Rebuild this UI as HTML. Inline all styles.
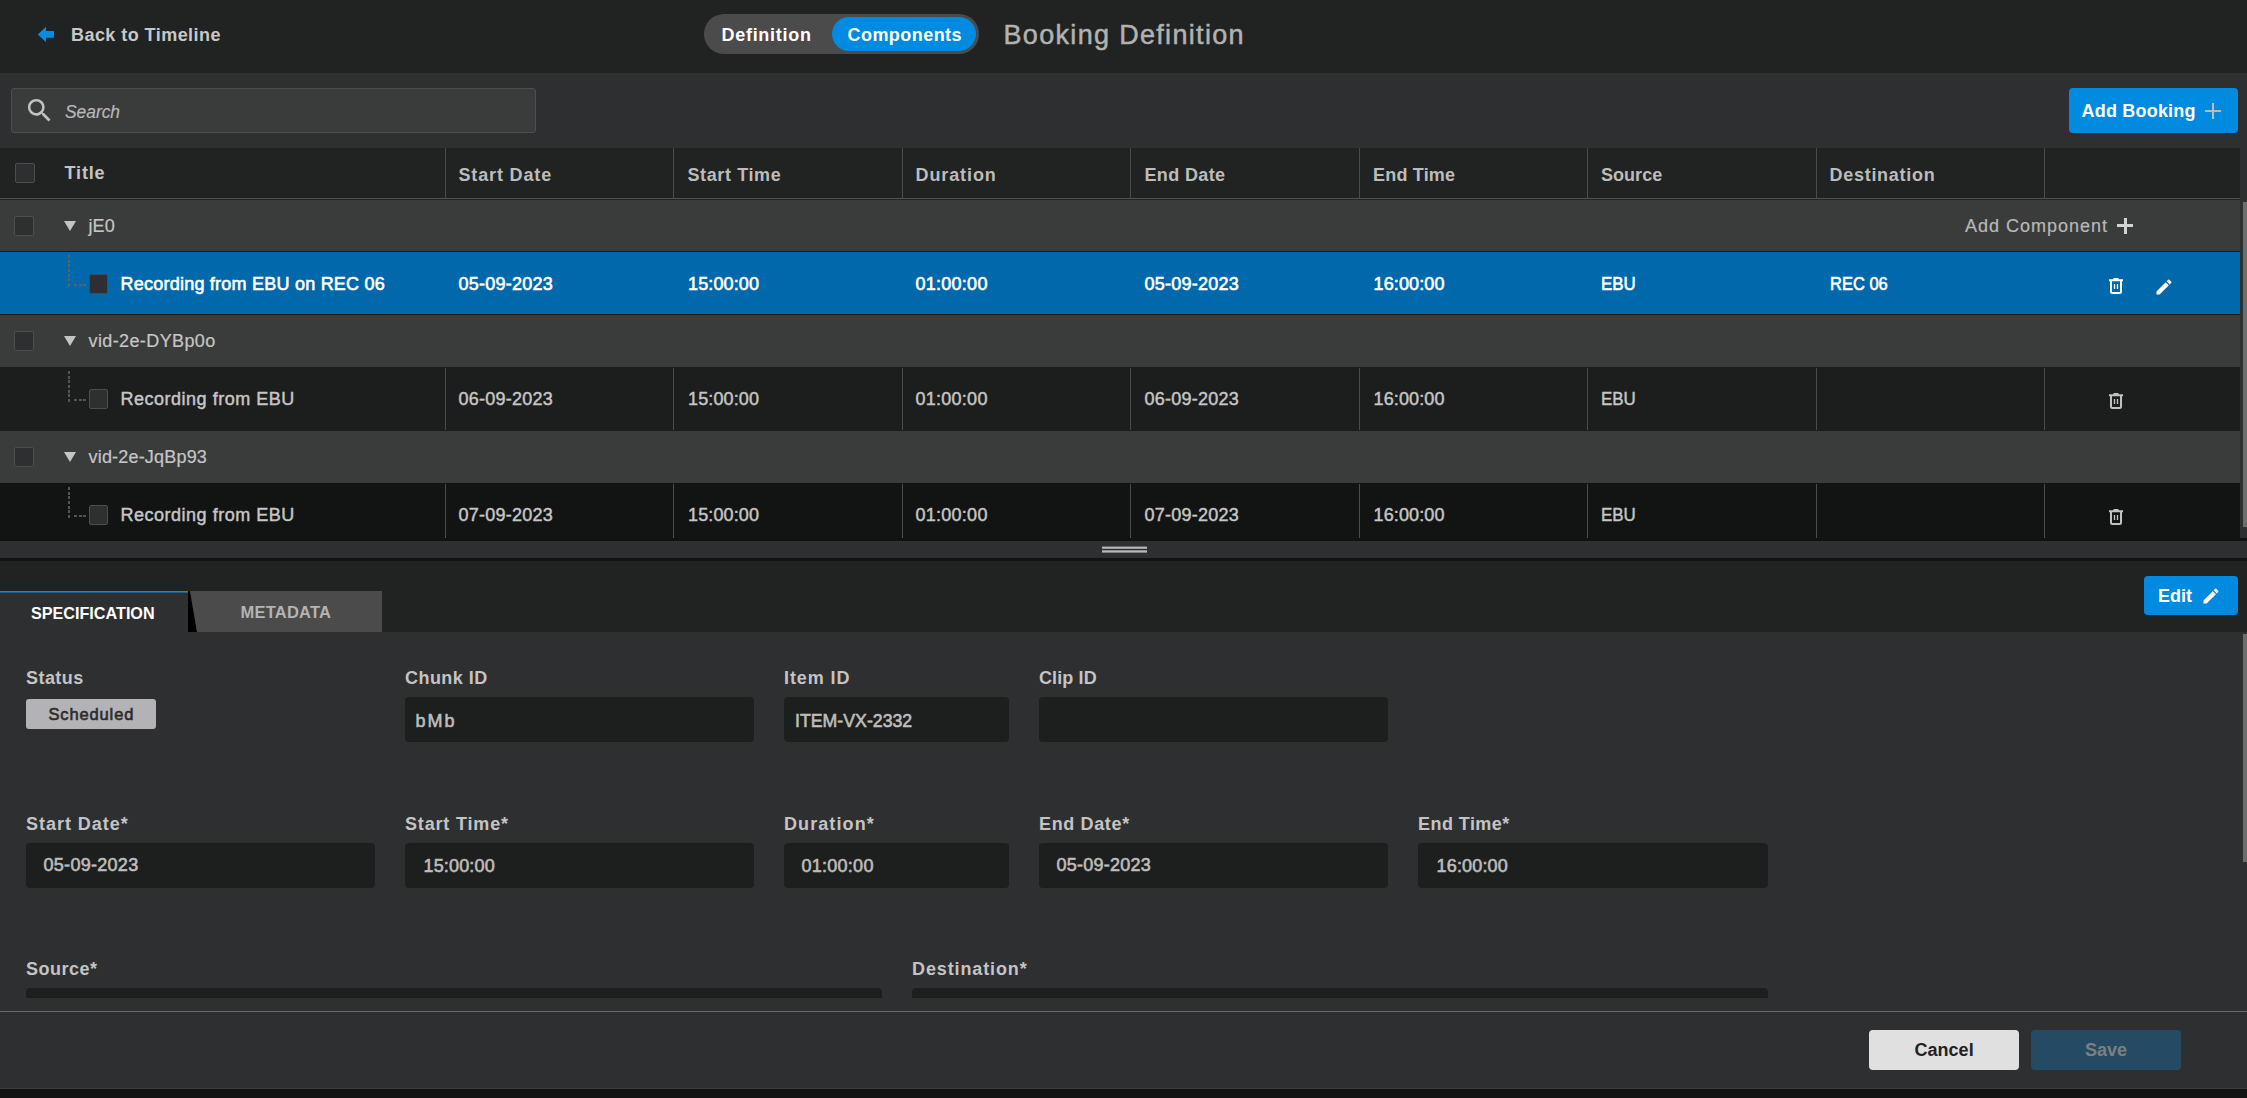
<!DOCTYPE html>
<html lang="en">
<head>
<meta charset="utf-8">
<title>Booking Definition</title>
<style>
*{box-sizing:border-box;margin:0;padding:0}
html,body{width:2247px;height:1098px;overflow:hidden;background:#212322}
body{font-family:"Liberation Sans",sans-serif;color:#c8c8c8;position:relative;font-size:18px}
.abs{position:absolute}
.t{position:absolute;white-space:nowrap;line-height:24px;height:24px;font-size:18px}
.sb{-webkit-text-stroke:0.6px currentColor}
.b{font-weight:bold}
#topbar{left:0;top:0;width:2247px;height:73px;background:#212322}
#toolbar{left:0;top:73px;width:2247px;height:75px;background:#2e2f31}
#thead{left:0;top:148px;width:2240px;height:50px;background:#212322}
#tbody{left:0;top:200px;width:2240px;height:338px;background:#1c1d1d;overflow:hidden}
#vscroll1{left:2240px;top:148px;width:7px;height:390px;background:#2e2f31}
.grp{position:absolute;left:0;width:2240px;background:#3a3c3b}
.row{position:absolute;left:0;width:2240px}
.sep{position:absolute;width:1px;background:#4a4b4a}
.cb{position:absolute;width:20px;height:20px;background:#2e2f31;border:1px solid #4c4d4d;border-radius:2px}
.tri{position:absolute;width:0;height:0;border-left:6px solid transparent;border-right:6px solid transparent;border-top:10px solid #c4c4c4}
.hd{color:#bcbcbc}
.gt{color:#c6c6c6;-webkit-text-stroke:0.2px currentColor}
.cv{color:#c6c6c6;-webkit-text-stroke-width:0.45px}
.sel .cv{color:#fff;-webkit-text-stroke-width:0.6px}
.dv{position:absolute;width:2px;background:repeating-linear-gradient(to bottom,#535454 0,#535454 3px,transparent 3px,transparent 4.650px)}
.dh{position:absolute;height:2px;background:repeating-linear-gradient(to right,#535454 0,#535454 3.200px,transparent 3.200px,transparent 4.500px)}
.sel .dv{background:repeating-linear-gradient(to bottom,#5f625f 0,#5f625f 3px,transparent 3px,transparent 4.650px)}
.sel .dh{background:repeating-linear-gradient(to right,#5f625f 0,#5f625f 3.200px,transparent 3.200px,transparent 4.500px)}
.lbl{font-weight:bold;color:#c4c4c4}
.inp{position:absolute;height:45px;background:#1d1f1e;border-radius:4px}
.iv{color:#bdbdbd}
</style>
</head>
<body>
<div id="topbar" class="abs">
<svg class="abs" style="left:37px;top:26px" width="18" height="18" viewBox="0 0 18 18"><path d="M0.750 8.500 L9 0.800 L9 5 L17 5 L17 11.800 L9 11.800 L9 16.100 Z" fill="#028ee6"/></svg>
<span class="t b" style="letter-spacing:0.45px;left:71px;top:23px;color:#c8c8c8">Back to Timeline</span>
<div class="abs" style="left:704px;top:14px;width:275px;height:40px;border-radius:20px;background:#4b4b4b"></div>
<div class="abs" style="left:832px;top:17px;width:144px;height:34px;border-radius:17px;background:#008be0"></div>
<span class="t b" style="letter-spacing:0.71px;left:721.5px;top:23px;color:#fff">Definition</span>
<span class="t b" style="letter-spacing:0.45px;left:847.5px;top:23px;color:#fff">Components</span>
<span class="t " style="letter-spacing:1.32px;left:1003.5px;top:18.5px;font-size:27px;line-height:32px;height:32px;color:#b2b2b2;-webkit-text-stroke:0.5px currentColor">Booking Definition</span>
</div>
<div id="toolbar" class="abs">
<div class="abs" style="left:11px;top:15px;width:525px;height:45px;background:#3a3b3b;border:1px solid #4d4e4e;border-radius:3px"></div>
<svg class="abs" style="left:24.300px;top:22.400px" width="31" height="31" viewBox="0 0 24 24"><path fill="#c2c2c2" d="M15.500 14h-.790l-.280-.270A6.471 6.471 0 0 0 16 9.500 6.500 6.500 0 1 0 9.500 16c1.610 0 3.090-.590 4.230-1.570l.270.280v.790l5 4.990L20.490 19l-4.990-5zm-6 0C7.010 14 5 11.990 5 9.500S7.010 5 9.500 5 14 7.010 14 9.500 11.990 14 9.500 14z"/></svg>
<span class="t " style="transform:scaleX(0.9645);transform-origin:0 50%;left:64.5px;top:27px;font-style:italic;color:#b8b8b8;-webkit-text-stroke:0.2px currentColor">Search</span>
<div class="abs" style="left:2069px;top:15px;width:169px;height:45px;border-radius:4px;background:#008be0"></div>
<span class="t b" style="letter-spacing:0.2px;left:2081.5px;top:25.5px;color:#fff">Add Booking</span>
<div class="abs" style="left:2205px;top:36.500px;width:16px;height:2px;background:#b9bcbe"></div>
<div class="abs" style="left:2212px;top:29.500px;width:2px;height:16px;background:#b9bcbe"></div>
</div>
<div id="thead" class="abs">
<div class="cb" style="left:15px;top:15px"></div>
<span class="t b" style="letter-spacing:0.86px;left:64.5px;top:13px;color:#c4c4c4">Title</span>
<div class="sep" style="left:445px;top:0;height:50px"></div>
<div class="sep" style="left:673px;top:0;height:50px"></div>
<div class="sep" style="left:902px;top:0;height:50px"></div>
<div class="sep" style="left:1130px;top:0;height:50px"></div>
<div class="sep" style="left:1359px;top:0;height:50px"></div>
<div class="sep" style="left:1587px;top:0;height:50px"></div>
<div class="sep" style="left:1816px;top:0;height:50px"></div>
<div class="sep" style="left:2044px;top:0;height:50px"></div>
<span class="t b hd" style="letter-spacing:0.85px;left:458.5px;top:15px;">Start Date</span>
<span class="t b hd" style="letter-spacing:0.61px;left:687.5px;top:15px;">Start Time</span>
<span class="t b hd" style="letter-spacing:0.9px;left:915.5px;top:15px;">Duration</span>
<span class="t b hd" style="letter-spacing:0.36px;left:1144.5px;top:15px;">End Date</span>
<span class="t b hd" style="letter-spacing:0.2px;left:1373px;top:15px;">End Time</span>
<span class="t b hd" style="letter-spacing:0.04px;left:1601px;top:15px;">Source</span>
<span class="t b hd" style="letter-spacing:0.72px;left:1829.5px;top:15px;">Destination</span>
</div>
<div class="abs" style="left:0;top:198px;width:2240px;height:1px;background:#4f504f"></div>
<div class="abs" style="left:0;top:199px;width:2240px;height:1px;background:#212322"></div>
<div id="vscroll1" class="abs"><div class="abs" style="left:3px;top:54px;width:4px;height:325px;background:#6b6d6c"></div></div>
<div id="tbody" class="abs">
<div class="grp" style="top:0px;height:51px">
<div class="cb" style="left:14px;top:16px"></div>
<div class="tri" style="left:64px;top:21px"></div>
<span class="t gt" style="letter-spacing:0.1px;left:88.5px;top:14px;">jE0</span>
<span class="t " style="letter-spacing:0.99px;left:1965px;top:14px;color:#b8b8b8;-webkit-text-stroke:0.2px currentColor">Add Component</span>
<div class="abs" style="left:2117px;top:24px;width:16px;height:3px;background:#d2d2d2"></div>
<div class="abs" style="left:2123.500px;top:17.500px;width:3px;height:16px;background:#d2d2d2"></div>
</div>
<div class="row sel" style="top:51px;height:64px;background:#1a1b1b">
<div class="abs" style="left:0;top:1px;width:2240px;height:62px;background:#0068ab"></div>
<div class="dv" style="left:68px;top:4px;height:31px"></div>
<div class="dh" style="left:74px;top:33px;width:12.300px"></div>
<div class="cb" style="left:89px;top:23px;width:19px;border-color:#36506a;"></div>
<span class="t cv sb" style="letter-spacing:0.23px;left:120.5px;top:21px;">Recording from EBU on REC 06</span>
<span class="t cv sb" style="letter-spacing:0.25px;left:458.5px;top:21px;">05-09-2023</span>
<span class="t cv sb" style="letter-spacing:0.13px;left:688px;top:21px;">15:00:00</span>
<span class="t cv sb" style="letter-spacing:0.26px;left:915.5px;top:21px;">01:00:00</span>
<span class="t cv sb" style="letter-spacing:0.25px;left:1144.5px;top:21px;">05-09-2023</span>
<span class="t cv sb" style="letter-spacing:0.13px;left:1373.5px;top:21px;">16:00:00</span>
<span class="t cv sb" style="transform:scaleX(0.938);transform-origin:0 50%;left:1601px;top:21px;">EBU</span>
<span class="t cv sb" style="transform:scaleX(0.9157);transform-origin:0 50%;left:1830px;top:21px;">REC 06</span>
<svg class="abs" style="left:2108px;top:26px" width="16" height="18" viewBox="0 0 16 18"><path fill="none" stroke="#fff" stroke-width="2" d="M1 3.200 H15 M5.500 2 H10.500 M3 4 V14.500 Q3 16 4.500 16 H11.500 Q13 16 13 14.500 V4"/><path stroke="#fff" stroke-width="1.300" d="M6.500 7 V12 M9.500 7 V12"/></svg>
<svg class="abs" style="left:2154.2px;top:25.7px" width="20" height="20" viewBox="0 0 24 24"><path fill="#fff" d="M3 17.250V21h3.750L17.810 9.940l-3.750-3.750L3 17.250zM20.710 7.040a.996.996 0 0 0 0-1.410l-2.340-2.340a.996.996 0 0 0-1.410 0l-1.830 1.830 3.750 3.750 1.830-1.830z"/></svg>
</div>
<div class="grp" style="top:115px;height:52px">
<div class="cb" style="left:14px;top:16px"></div>
<div class="tri" style="left:64px;top:21px"></div>
<span class="t gt" style="letter-spacing:0.39px;left:88.5px;top:14px;">vid-2e-DYBp0o</span>
</div>
<div class="row" style="top:167px;height:64px;background:#1c1d1d">
<div class="sep" style="left:445px;top:1px;height:62px"></div>
<div class="sep" style="left:673px;top:1px;height:62px"></div>
<div class="sep" style="left:902px;top:1px;height:62px"></div>
<div class="sep" style="left:1130px;top:1px;height:62px"></div>
<div class="sep" style="left:1359px;top:1px;height:62px"></div>
<div class="sep" style="left:1587px;top:1px;height:62px"></div>
<div class="sep" style="left:1816px;top:1px;height:62px"></div>
<div class="sep" style="left:2044px;top:1px;height:62px"></div>
<div class="dv" style="left:68px;top:4px;height:31px"></div>
<div class="dh" style="left:74px;top:32px;width:12.300px"></div>
<div class="cb" style="left:89px;top:22px;width:19px;"></div>
<span class="t cv sb" style="letter-spacing:0.51px;left:120.5px;top:19.5px;">Recording from EBU</span>
<span class="t cv sb" style="letter-spacing:0.25px;left:458.5px;top:19.5px;">06-09-2023</span>
<span class="t cv sb" style="letter-spacing:0.13px;left:688px;top:19.5px;">15:00:00</span>
<span class="t cv sb" style="letter-spacing:0.26px;left:915.5px;top:19.5px;">01:00:00</span>
<span class="t cv sb" style="letter-spacing:0.25px;left:1144.5px;top:19.5px;">06-09-2023</span>
<span class="t cv sb" style="letter-spacing:0.13px;left:1373.5px;top:19.5px;">16:00:00</span>
<span class="t cv sb" style="transform:scaleX(0.938);transform-origin:0 50%;left:1601px;top:19.5px;">EBU</span>
<svg class="abs" style="left:2108px;top:25px" width="16" height="18" viewBox="0 0 16 18"><path fill="none" stroke="#c2c2c2" stroke-width="2" d="M1 3.200 H15 M5.500 2 H10.500 M3 4 V14.500 Q3 16 4.500 16 H11.500 Q13 16 13 14.500 V4"/><path stroke="#c2c2c2" stroke-width="1.300" d="M6.500 7 V12 M9.500 7 V12"/></svg>
</div>
<div class="grp" style="top:231px;height:52px">
<div class="cb" style="left:14px;top:16px"></div>
<div class="tri" style="left:64px;top:21px"></div>
<span class="t gt" style="letter-spacing:0.19px;left:88.5px;top:14px;">vid-2e-JqBp93</span>
</div>
<div class="row" style="top:283px;height:64px;background:#121413">
<div class="sep" style="left:445px;top:1px;height:62px"></div>
<div class="sep" style="left:673px;top:1px;height:62px"></div>
<div class="sep" style="left:902px;top:1px;height:62px"></div>
<div class="sep" style="left:1130px;top:1px;height:62px"></div>
<div class="sep" style="left:1359px;top:1px;height:62px"></div>
<div class="sep" style="left:1587px;top:1px;height:62px"></div>
<div class="sep" style="left:1816px;top:1px;height:62px"></div>
<div class="sep" style="left:2044px;top:1px;height:62px"></div>
<div class="dv" style="left:68px;top:4px;height:31px"></div>
<div class="dh" style="left:74px;top:32px;width:12.300px"></div>
<div class="cb" style="left:89px;top:22px;width:19px;"></div>
<span class="t cv sb" style="letter-spacing:0.51px;left:120.5px;top:19.5px;">Recording from EBU</span>
<span class="t cv sb" style="letter-spacing:0.25px;left:458.5px;top:19.5px;">07-09-2023</span>
<span class="t cv sb" style="letter-spacing:0.13px;left:688px;top:19.5px;">15:00:00</span>
<span class="t cv sb" style="letter-spacing:0.26px;left:915.5px;top:19.5px;">01:00:00</span>
<span class="t cv sb" style="letter-spacing:0.25px;left:1144.5px;top:19.5px;">07-09-2023</span>
<span class="t cv sb" style="letter-spacing:0.13px;left:1373.5px;top:19.5px;">16:00:00</span>
<span class="t cv sb" style="transform:scaleX(0.938);transform-origin:0 50%;left:1601px;top:19.5px;">EBU</span>
<svg class="abs" style="left:2108px;top:25px" width="16" height="18" viewBox="0 0 16 18"><path fill="none" stroke="#c2c2c2" stroke-width="2" d="M1 3.200 H15 M5.500 2 H10.500 M3 4 V14.500 Q3 16 4.500 16 H11.500 Q13 16 13 14.500 V4"/><path stroke="#c2c2c2" stroke-width="1.300" d="M6.500 7 V12 M9.500 7 V12"/></svg>
</div>
</div>
<div class="abs" style="left:0;top:538px;width:2247px;height:3px;background:#121212"></div>
<div class="abs" style="left:0;top:541px;width:2247px;height:17px;background:#2e2f31"></div>
<svg class="abs" style="left:1100px;top:544px" width="50" height="12" viewBox="0 0 50 12"><rect x="2" y="2.600" width="45" height="2.200" fill="#b8b8b8"/><rect x="2" y="6.300" width="45" height="2.300" fill="#b8b8b8"/></svg>
<div class="abs" style="left:0;top:558px;width:2247px;height:3px;background:#121212"></div>
<div id="panel" class="abs" style="left:0;top:561px;width:2247px;height:537px;background:#212322">
<div class="abs" style="left:0;top:30px;width:188px;height:41px;background:#2e2f31;border-top:1px solid #0a8be0"></div>
<div class="abs" style="left:0;top:31px;width:188px;height:1px;background:#1b5f8e"></div>
<svg class="abs" style="left:188px;top:30px" width="194" height="41" viewBox="0 0 194 41"><path d="M0 0 H2 L9 41 H0 Z" fill="#000"/><path d="M2 0 H194 V41 H9 Z" fill="#4b4b4b"/></svg>
<span class="t b" style="transform:scaleX(0.9795);transform-origin:0 50%;left:30.5px;top:40px;font-size:16.500px;color:#fff">SPECIFICATION</span>
<span class="t b" style="letter-spacing:0.22px;left:240.5px;top:39px;font-size:16.500px;color:#b4b4b4">METADATA</span>
<div class="abs" style="left:2144px;top:15px;width:94px;height:39px;border-radius:4px;background:#008be0"></div>
<span class="t b" style="letter-spacing:0.01px;left:2158px;top:23px;color:#fff">Edit</span>
<svg class="abs" style="left:2201.3px;top:24.5px" width="20" height="20" viewBox="0 0 24 24"><path fill="#fff" d="M3 17.250V21h3.750L17.810 9.940l-3.750-3.750L3 17.250zM20.710 7.040a.996.996 0 0 0 0-1.410l-2.340-2.340a.996.996 0 0 0-1.410 0l-1.830 1.830 3.750 3.750 1.830-1.830z"/></svg>
<div id="content" class="abs" style="left:0;top:71px;width:2247px;height:379px;background:#2e2f31;overflow:hidden">
<div class="abs" style="left:2243px;top:2px;width:4px;height:228px;background:#6b6d6c"></div>
<span class="t lbl" style="letter-spacing:0.44px;left:26px;top:33.5px;">Status</span>
<div class="abs" style="left:26px;top:67px;width:130px;height:30px;border-radius:3px;background:#b3b3b7"></div>
<span class="t sb" style="letter-spacing:0.86px;left:48.5px;top:69.5px;font-size:16.500px;color:#2b2b2b">Scheduled</span>
<span class="t lbl" style="letter-spacing:0.46px;left:405px;top:33.5px;">Chunk ID</span>
<div class="inp" style="left:405px;top:65px;width:349px"></div>
<span class="t iv sb" style="letter-spacing:2.0px;left:415.5px;top:77px;">bMb</span>
<span class="t lbl" style="letter-spacing:0.9px;left:784px;top:33.5px;">Item ID</span>
<div class="inp" style="left:784px;top:65px;width:225px"></div>
<span class="t iv sb" style="transform:scaleX(0.9847);transform-origin:0 50%;left:794.5px;top:76.5px;">ITEM-VX-2332</span>
<span class="t lbl" style="letter-spacing:0.12px;left:1039px;top:33.5px;">Clip ID</span>
<div class="inp" style="left:1039px;top:65px;width:349px"></div>
<span class="t lbl" style="letter-spacing:0.97px;left:26px;top:179.5px;">Start Date*</span>
<div class="inp" style="left:26px;top:211px;width:349px"></div>
<span class="t iv sb" style="letter-spacing:0.29px;left:43.5px;top:220.5px;">05-09-2023</span>
<span class="t lbl" style="letter-spacing:0.83px;left:405px;top:179.5px;">Start Time*</span>
<div class="inp" style="left:405px;top:211px;width:349px"></div>
<span class="t iv sb" style="letter-spacing:0.16px;left:423.5px;top:221.5px;">15:00:00</span>
<span class="t lbl" style="letter-spacing:1.09px;left:784px;top:179.5px;">Duration*</span>
<div class="inp" style="left:784px;top:211px;width:225px"></div>
<span class="t iv sb" style="letter-spacing:0.26px;left:801.5px;top:221.5px;">01:00:00</span>
<span class="t lbl" style="letter-spacing:0.64px;left:1039px;top:179.5px;">End Date*</span>
<div class="inp" style="left:1039px;top:211px;width:349px"></div>
<span class="t iv sb" style="letter-spacing:0.24px;left:1056.5px;top:220.5px;">05-09-2023</span>
<span class="t lbl" style="letter-spacing:0.45px;left:1418px;top:179.5px;">End Time*</span>
<div class="inp" style="left:1418px;top:211px;width:350px"></div>
<span class="t iv sb" style="letter-spacing:0.18px;left:1436.5px;top:221.5px;">16:00:00</span>
<span class="t lbl" style="letter-spacing:0.48px;left:26px;top:325px;">Source*</span>
<div class="inp" style="left:26px;top:356px;width:856px;height:10px;border-radius:4px 4px 0 0"></div>
<span class="t lbl" style="letter-spacing:0.88px;left:912px;top:325px;">Destination*</span>
<div class="inp" style="left:912px;top:356px;width:856px;height:10px;border-radius:4px 4px 0 0"></div>
</div>
<div class="abs" style="left:0;top:450px;width:2247px;height:78px;background:#2e2f31;border-top:1px solid #6a6b6c"></div>
<div class="abs" style="left:1869px;top:469px;width:150px;height:40px;border-radius:4px;background:#e0e0e0"></div>
<span class="t b" style="letter-spacing:0.02px;left:1914.5px;top:476.5px;color:#222">Cancel</span>
<div class="abs" style="left:2031px;top:469px;width:150px;height:40px;border-radius:4px;background:#254a63"></div>
<span class="t b" style="letter-spacing:-0.01px;left:2085px;top:476.5px;color:#7b8084">Save</span>
<div class="abs" style="left:0;top:527px;width:2247px;height:1px;background:#3a3b3b"></div>
<div class="abs" style="left:0;top:528px;width:2247px;height:9px;background:#131313"></div>
</div>
</body>
</html>
